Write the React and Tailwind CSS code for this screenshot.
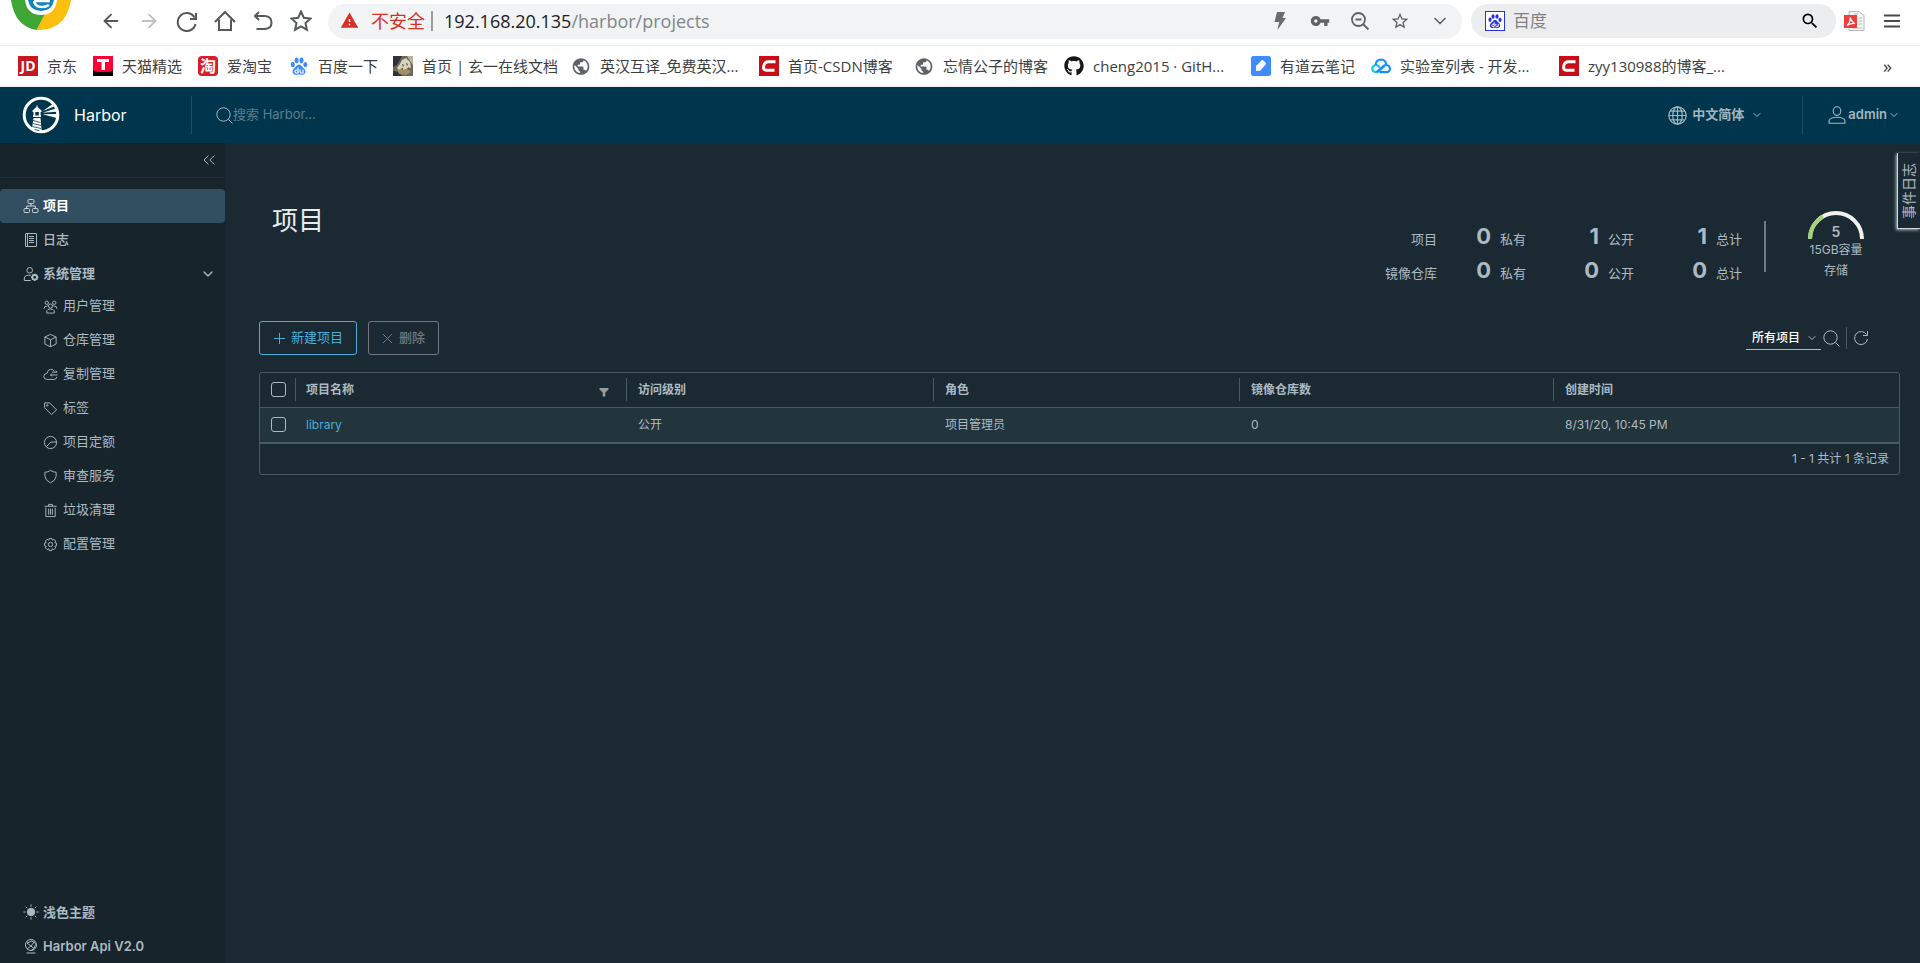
import { useState } from 'react';
import { LuArrowLeft, LuArrowRight, LuChevronDown, LuChevronsLeft, LuMenu } from 'react-icons/lu';
import { MdPublic, MdSearch, MdStarBorder, MdVpnKey, MdWarning } from 'react-icons/md';
import { FaGithub } from 'react-icons/fa';

const bookmarks = [
  { label: '京东', icon: 'jd', width: 'w-[30px]' },
  { label: '天猫精选', icon: 'tmall', width: 'w-[60px]' },
  { label: '爱淘宝', icon: 'taobao', width: 'w-[46px]' },
  { label: '百度一下', icon: 'baidu', width: 'w-[59px]' },
  { label: '首页 | 玄一在线文档', icon: 'avatar', width: 'w-[133px]' },
  { label: '英汉互译_免费英汉...', icon: 'globe', width: 'w-[143px]' },
  { label: '首页-CSDN博客', icon: 'csdn', width: 'w-[110px]' },
  { label: '忘情公子的博客', icon: 'globe', width: 'w-[105px]' },
  { label: 'cheng2015 · GitH...', icon: 'github', width: 'w-[142px]' },
  { label: '有道云笔记', icon: 'note', width: 'w-[75px]' },
  { label: '实验室列表 - 开发...', icon: 'cloud', width: 'w-[143px]' },
  { label: 'zyy130988的博客_...', icon: 'csdn', width: 'w-[143px]' },
];

const adminItems = [
  { label: '用户管理', icon: 'users' },
  { label: '仓库管理', icon: 'cube' },
  { label: '复制管理', icon: 'cloud' },
  { label: '标签', icon: 'tag' },
  { label: '项目定额', icon: 'quota' },
  { label: '审查服务', icon: 'shield' },
  { label: '垃圾清理', icon: 'trash' },
  { label: '配置管理', icon: 'cog' },
];

const stats = [
  { label: '项目', values: [[0, '私有'], [1, '公开'], [1, '总计']] },
  { label: '镜像仓库', values: [[0, '私有'], [0, '公开'], [0, '总计']] },
];

const columns = [
  { label: '访问级别', width: 'w-[307px]' },
  { label: '角色', width: 'w-[306px]' },
  { label: '镜像仓库数', width: 'w-[314px]' },
  { label: '创建时间', width: '' },
];

const projects = [
  { name: 'library', cells: ['公开', '项目管理员', '0', '8/31/20, 10:45 PM'] },
];

function BookmarkIcon({ name }) {
  switch (name) {
    case 'jd':
      return <span className="flex h-5 w-5 items-center justify-center bg-[#c81623] text-sm font-bold text-white">JD</span>;
    case 'tmall':
      return (
        <svg viewBox="0 0 20 20" className="h-5 w-5">
          <path fill="#ff0036" d="M0 0h20v16H0z" />
          <path fill="#000" d="M0 14q2 2 5 2h10q3 0 5-2v6H0z" />
          <path fill="#fff" d="M4 3h12v3h-4v8H8.500V6H4z" />
        </svg>
      );
    case 'taobao':
      return <span className="flex h-5 w-5 items-center justify-center rounded-sm bg-[#dc1c28] text-base font-bold text-white">淘</span>;
    case 'baidu':
      return <BaiduPaw className="h-5 w-5 text-[#3b8bff]" />;
    case 'avatar':
      return (
        <svg viewBox="0 0 20 20" className="h-5 w-5">
          <path fill="#6d675a" d="M0 0h20v20H0z" />
          <path fill="#2f3238" d="M0 0h9L4 9 0 11zM0 15l6 1 3 4H0z" />
          <path fill="#b9b3a2" d="M14 0h6v9l-3-4z" />
          <path fill="#d9d2bf" d="M9 4l4-2 4 4 1 5-3 4-7 1-4-4 3-4z" />
          <path fill="#a58f62" d="M4 13l6 1 5-2 3 4-5 3-7-1z" />
          <path fill="#4d4638" d="M9 8l2 1-1 2zM13 7l2 1-1 2zM7 13l3-1v2zM14 13l2-2 1 3z" />
        </svg>
      );
    case 'globe':
      return <MdPublic className="h-[21px] w-5 text-[#5f6368]" />;
    case 'csdn':
      return (
        <svg viewBox="0 0 20 20" className="h-5 w-5">
          <path fill="#ca0c16" d="M0 0h20v20H0z" />
          <path fill="none" stroke="#fff" strokeWidth="3" d="M16.500 5.700H9.500Q5.500 5.700 4.700 10T7.500 14.300h8" />
        </svg>
      );
    case 'github':
      return <FaGithub className="h-5 w-5 text-[#191717]" />;
    case 'note':
      return (
        <svg viewBox="0 0 20 20" className="h-5 w-5">
          <rect width="20" height="20" rx="2.500" fill="#3f8cff" />
          <path fill="#fff" d="M5 15V10l6-6q2 0 4 4l-5.500 6.500z" />
        </svg>
      );
    default:
      return (
        <svg viewBox="0 0 20 20" className="h-5 w-5" fill="none" strokeWidth="2.200">
          <path stroke="#16c8e8" d="M9 12Q7 8.500 4.500 9.200 1 10 1.300 13T5 16.200q2 0 4-2l4.500-4" />
          <path stroke="#1e8cff" d="M4.500 9Q5 3.700 10 3.500q4.500 0 5.500 5.200M8.500 16.200H15q4-.4 3.900-3.700T15 9q-1.800 0-3.500 2L5.500 16.200" />
        </svg>
      );
  }
}

function BaiduPaw({ className }) {
  return (
    <svg viewBox="0 0 20 20" className={className} fill="currentColor">
      <ellipse cx="3.800" cy="8.400" rx="2" ry="2.700" />
      <ellipse cx="7.600" cy="4.400" rx="2" ry="2.800" />
      <ellipse cx="12.500" cy="4.400" rx="2" ry="2.800" />
      <ellipse cx="16.300" cy="8.600" rx="2" ry="2.600" />
      <path d="M10 8.600c2.400 0 3.100 2.500 5 4s2.300 6-1.500 6.200c-1.500 0-2-.3-3.500-.3s-2 .3-3.500.3C2.700 18.600 3.100 14.100 5 12.600s2.600-4 5-4z" />
      <path fill="none" stroke="#fff" strokeWidth="1.200" d="M9 11.500V17H7.300q-1.300-.1-1.300-1.500t1.300-1.500H9M11 13.500V16q.2 1 1.200 1H14v-3.500" />
    </svg>
  );
}

function ClarityIcon({ name, className = 'h-4 w-4' }) {
  const shapes = {
    projects: (
      <>
        <rect x="5" y="1.500" width="6" height="4" rx="1.200" />
        <rect x="1" y="10.500" width="5.500" height="4" rx="1" />
        <rect x="9.500" y="10.500" width="5.500" height="4" rx="1" />
        <path d="M8 5.500V8M3.700 10.500V8h8.600v2.500" />
      </>
    ),
    logs: (
      <>
        <rect x="2.500" y="1.500" width="11" height="13" rx=".5" />
        <path d="M6 4.500h5M6 6.500h5M6 8.500h5M6 10.500h5M4.500 1.500v13" />
      </>
    ),
    admin: (
      <>
        <circle cx="6.700" cy="4.300" r="2.800" />
        <path d="M8 9.300Q2 8.500 1.300 12v2.500h6.500" />
        <circle cx="11.700" cy="11.300" r="2.300" strokeWidth="1.800" />
        <path strokeWidth="1.500" d="M11.700 7.700v1.300M11.700 13.600v1.300M8 11.300h1.300M14 11.300h1.500M9.200 8.800l.9.900M14.200 8.800l-.9.900M9.200 13.800l.9-.9M14.200 13.800l-.9-.9" />
      </>
    ),
    users: (
      <>
        <circle cx="8" cy="7.500" r="2.200" />
        <path d="M4 15v-2.500q.7-1.800 4-1.800t4 1.800V15zM1 10.500q0-3.300 4-3.200M15 10.500q0-3.300-4-3.200" />
        <circle cx="4" cy="4" r="1.800" />
        <circle cx="12" cy="4" r="1.800" />
      </>
    ),
    cube: <path d="M8 1.500l6 2.700v7.600L8 14.700l-6-2.900V4.200zM2 4.200l6 3 6-3M8 7.200v7.500" />,
    cloud: (
      <path d="M12.500 4.800Q11 2.200 8 2.500 4.700 3 4.500 6.500 1 7 .8 10q0 3 3.200 3.200h8q2.500-.2 2.800-2.700M15 5.500H9.500M15.500 8.500H8M13.700 4l1.500 1.500M9.500 7L8 8.500 9.500 10" />
    ),
    tag: (
      <>
        <path d="M1.700 2v5.200l7.300 7.300 5.500-5L7.200 2z" />
        <circle cx="4.500" cy="4.700" r=".8" />
      </>
    ),
    quota: (
      <>
        <circle cx="8" cy="8" r="6.500" />
        <path d="M3.500 12.500L8.500 7.500h6" />
      </>
    ),
    shield: <path d="M8 1.500q2.500 1.800 6 2v4.300q-.5 4.500-6 7-5.500-2.500-6-7V3.500q3.500-.2 6-2z" />,
    trash: <path d="M1.500 3.500h13M6 3.500v-2h4v2M3 5v9.500h10V5M6 6v6.500M8 6v6.500M10 6v6.500" />,
    cog: (
      <>
        <circle cx="8" cy="8" r="2.300" />
        <path d="M6.700 1.500h2.600l.5 1.900 1.800-1 1.900 1.900-1 1.800 2 .5v2.700l-2 .5 1 1.800-1.900 1.900-1.800-1-.5 2H6.700l-.5-2-1.800 1-1.900-1.900 1-1.800-2-.5V6.600l2-.5-1-1.800 1.900-1.900 1.800 1z" />
      </>
    ),
    sun: (
      <>
        <circle cx="8" cy="8" r="3.700" fill="currentColor" />
        <path d="M8 .5v2.200M8 13.300v2.200M.5 8h2.200M13.300 8h2.200M2.700 2.700l1.500 1.500M11.800 11.800l1.500 1.500M2.700 13.300l1.500-1.500M11.800 4.200l1.500-1.500" />
      </>
    ),
    api: (
      <>
        <circle cx="8" cy="7" r="5.500" />
        <path d="M3.500 15h9M4 5l7 5.500M11.500 3.500L8 8l-4 3M4 5l5-2 3.500 2.500M8 12.500l3-2 1.500-4" />
      </>
    ),
    user: (
      <>
        <ellipse cx="8" cy="4.500" rx="3.400" ry="3.800" />
        <path d="M1 15.300v-2.500Q2 10 8 10t7 2.800v2.500z" />
      </>
    ),
    world: (
      <>
        <circle cx="8" cy="8" r="7.300" />
        <path d="M8 .7v14.600M.7 8h14.600M2 4.300h12M2 11.700h12" />
        <ellipse cx="8" cy="8" rx="4" ry="7.300" />
      </>
    ),
  };
  return (
    <svg viewBox="0 0 16 16" className={`shrink-0 ${className}`} fill="none" stroke="currentColor" strokeWidth="1">
      {shapes[name]}
    </svg>
  );
}

function HarborLogo() {
  return (
    <svg viewBox="0 0 38 38" className="h-[38px] w-[38px]">
      <circle cx="19" cy="19" r="16.800" fill="none" stroke="#fff" strokeWidth="3" />
      <path fill="#fff" d="M10.500 14.500L14.500 11v-1.500h1V11l4 3.500v1.500h-9zM11.500 16h1.800v4h-1.800zM16.800 16h1.800v4h-1.800zM11 19.500h8V21h-8z" />
      <path fill="#fff" d="M11.500 22h7l1.200 13.500q-5.500.5-9.700-3z" />
      <path stroke="#00364d" strokeWidth=".8" d="M11 24.500l7.500 2M11 27.500l8 2M10.500 30.500l8.500 2M12.500 33.500l5 1.200" />
      <path fill="#fff" d="M20.500 15.200L31 7.800l1.600 2.400zM20.500 16.700l13.200-4.200.8 3.200zM20.500 18.200l14.500-.2-.3 4z" />
    </svg>
  );
}

function ToolIcon({ d, className = 'h-[22px] w-[22px]' }) {
  return (
    <svg viewBox="0 0 22 22" className={className} fill="none" stroke="currentColor" strokeWidth="2">
      <path d={d} />
    </svg>
  );
}

function BrowserBar() {
  return (
    <div className="flex h-[45px] items-start bg-white pt-1">
      <svg viewBox="0 0 60 30" className="-mt-1 ml-[11px] h-[30px] w-[60px] shrink-0">
        <path fill="#3fa535" d="M0 0h42L26 30Q4 27 0 0z" />
        <path fill="#fdbf0f" d="M60 0H41L25.500 30Q55 31 60 0z" />
        <path fill="#fff" d="M14 0h32q-2 15-16 15T14 0z" />
        <path fill="#1183bd" d="M17 0h26q-2 11-13 11T17 0z" />
        <path fill="none" stroke="#fff" strokeWidth="2.500" d="M23 1h16M23 1q1 6 8 6 4 0 7-2" />
      </svg>
      <nav className="ml-[29px] flex h-[34px] items-center gap-4 text-[#55585b]">
        <button aria-label="后退"><LuArrowLeft className="h-[22px] w-[22px]" /></button>
        <button aria-label="前进" className="text-[#bfc1c3]"><LuArrowRight className="h-[22px] w-[22px]" /></button>
        <button aria-label="刷新"><ToolIcon d="M18.500 7.500A9 9 0 1 0 19.500 14M20 3v6h-6" /></button>
        <button aria-label="主页"><ToolIcon d="M1 12L11 2l10 10M5 9.500V20h12V9.500" /></button>
        <button aria-label="撤销"><ToolIcon d="M7 2L3 6l4 4M3 6h10q6.500.500 6.500 6.500T13 19H4.500" /></button>
        <button aria-label="收藏">
          <ToolIcon d="M11 1.500l2.800 6.200 6.700.8-5 4.500 1.400 6.700-5.900-3.400-5.900 3.400 1.400-6.700-5-4.500 6.700-.8z" />
        </button>
      </nav>
      <div className="ml-4 flex h-[35px] flex-1 items-center rounded-full bg-[#f1f3f4] px-3 pb-[2px] text-[#5f6368]">
        <MdWarning className="h-[19px] w-[19px] text-[#d93025]" />
        <span className="ml-3 text-lg leading-6 text-[#d93025]">不安全</span>
        <span className="ml-[6px] h-5 w-[2px] bg-[#9a9da0]" />
        <div className="ml-[11px] flex-1 text-lg leading-6 text-[#202124]">
          192.168.20.135<span className="text-[#80868b]">/harbor/projects</span>
        </div>
        <div className="flex items-center gap-5">
          <svg viewBox="0 0 20 20" className="h-5 w-5" fill="#6b6b6b">
            <path d="M7 1h8l-2.500 6H16L7.500 19l1.700-8H4.500z" />
          </svg>
          <MdVpnKey className="h-5 w-5" />
          <svg viewBox="0 0 20 20" className="h-5 w-5" fill="none" stroke="currentColor" strokeWidth="1.800">
            <circle cx="8.500" cy="8.500" r="6.500" />
            <path d="M13 13l5.500 5.500M5.500 8.500h6" />
          </svg>
          <MdStarBorder className="h-5 w-5" />
          <LuChevronDown className="h-5 w-5" />
        </div>
      </div>
      <div className="ml-[9px] flex h-[34px] w-[365px] items-center rounded-full bg-[#ecedef] pl-[14px] pr-4">
        <span className="flex h-5 w-5 items-center justify-center border border-[#2932e1] bg-white">
          <BaiduPaw className="h-4 w-4 text-[#2932e1]" />
        </span>
        <input
          aria-label="搜索"
          placeholder="百度"
          className="ml-2 min-w-0 flex-1 bg-transparent text-[17px] leading-6 outline-none placeholder:text-[#808285]"
        />
        <MdSearch className="h-5 w-5 text-black" />
      </div>
      <svg viewBox="0 0 22 22" className="ml-2 mt-[6px] h-[22px] w-[22px] shrink-0">
        <path fill="#f5f5f5" stroke="#b8b8b8" d="M5 1.500h10l5 4v15H5z" />
        <path stroke="#b8b8b8" d="M10 4h4M15 8h3M15 11h3M15 14h3M8 18h10" />
        <path fill="#ec3e3e" d="M0 5h13v13H0z" />
        <path fill="none" stroke="#fff" strokeWidth="1.200" d="M6 7.500q2 5 5 6-4-.5-8 2 4-4 3-8z" />
      </svg>
      <button aria-label="菜单" className="ml-[15px] mr-[17px] mt-[6px] text-[#4a4a4a]">
        <LuMenu className="h-[22px] w-[22px]" />
      </button>
    </div>
  );
}

function BookmarkBar() {
  return (
    <div className="flex h-[42px] items-center border-y border-[#ededf0] bg-white pl-[18px] pr-7 text-[15px] leading-5 text-[#3c4043]">
      {bookmarks.map((b) => (
        <a key={b.label} href="#" className="mr-4 flex shrink-0 items-center gap-[9px]">
          <BookmarkIcon name={b.icon} />
          <span className={`whitespace-nowrap ${b.width}`}>{b.label}</span>
        </a>
      ))}
      <button aria-label="更多书签" className="ml-auto text-lg leading-5">»</button>
    </div>
  );
}

function Header() {
  return (
    <header className="flex h-14 items-center bg-[#00364d] text-[13px] text-[#a3b6bf]">
      <a href="#" className="flex w-[191px] items-center gap-[14px] pl-[22px] text-base text-white">
        <HarborLogo />
        Harbor
      </a>
      <div className="flex h-[38px] flex-1 items-center border-l border-[#1f4f63] pl-6">
        <Magnifier className="h-[17px] w-[17px]" />
        <input
          aria-label="搜索 Harbor"
          placeholder="搜索 Harbor..."
          className="w-64 bg-transparent outline-none placeholder:text-[#5b7f8e]"
        />
      </div>
      <button className="mr-[39px] flex items-center font-semibold">
        <ClarityIcon name="world" className="mr-[5px] h-[19px] w-[19px]" />
        中文简体
        <LuChevronDown className="ml-[7px] h-3 w-3" />
      </button>
      <button className="flex h-[38px] items-center border-l border-[#1f4f63] pl-[25px] pr-5 font-semibold">
        <ClarityIcon name="user" className="mr-[2px] h-[18px] w-[18px]" />
        admin
        <LuChevronDown className="ml-px h-3 w-3" />
      </button>
    </header>
  );
}

function Magnifier({ className }) {
  return (
    <svg viewBox="0 0 17 17" className={`shrink-0 ${className}`} fill="none" stroke="currentColor">
      <circle cx="7.500" cy="7.500" r="6.700" />
      <path d="M12.300 12.300l4.200 4.200" />
    </svg>
  );
}

function Sidebar() {
  return (
    <aside className="flex w-[225px] shrink-0 flex-col bg-[#17242b] text-[13px] leading-5 text-[#acbac3]">
      <div className="flex h-[35px] items-center justify-end border-b border-[#212f37] pr-[6px]">
        <button aria-label="折叠"><LuChevronsLeft className="h-5 w-5" strokeWidth={1.200} /></button>
      </div>
      <nav className="mt-[11px] flex flex-col">
        <a href="#" className="flex h-[34px] items-center gap-1 rounded-[4px] bg-[#324f62] pl-[23px] font-bold text-white">
          <ClarityIcon name="projects" className="h-4 w-4 text-[#c8d3d9]" />
          <span className="pb-[2px]">项目</span>
        </a>
        <a href="#" className="flex h-[34px] items-center gap-1 pl-[23px] font-medium">
          <ClarityIcon name="logs" />
          <span className="pb-[2px]">日志</span>
        </a>
        <button className="flex h-[34px] items-center gap-1 pl-[23px] pr-[9px] font-bold">
          <ClarityIcon name="admin" />
          <span className="pb-[2px]">系统管理</span>
          <LuChevronDown className="ml-auto h-4 w-4" />
        </button>
        <ul className="-mt-[2px]">
          {adminItems.map((item) => (
            <li key={item.label}>
              <a href="#" className="flex h-[34px] items-center gap-[5px] pl-[43px]">
                <ClarityIcon name={item.icon} className="h-[15px] w-[15px]" />
                <span className="pb-[2px]">{item.label}</span>
              </a>
            </li>
          ))}
        </ul>
      </nav>
      <div className="mt-auto font-semibold">
        <button className="flex h-[34px] items-center gap-1 pl-[23px]">
          <ClarityIcon name="sun" />
          浅色主题
        </button>
        <a href="#" className="flex h-[34px] items-center gap-1 pl-[23px]">
          <ClarityIcon name="api" />
          Harbor Api V2.0
        </a>
      </div>
    </aside>
  );
}

function Statistics() {
  return (
    <div className="flex items-start text-[13px]">
      <div className="mt-[15px]">
        {stats.map((row) => (
          <div key={row.label} className="flex h-[34px] items-baseline">
            <span className="w-20 text-right">{row.label}</span>
            {row.values.map(([count, label], i) => (
              <span key={label} className={`flex items-baseline justify-end gap-[9px] ${i === 0 ? 'w-[89px]' : 'w-[108px]'}`}>
                <span className="text-[22px] font-bold leading-[34px]">{count}</span>
                {label}
              </span>
            ))}
          </div>
        ))}
      </div>
      <div className="ml-[22px] mt-[17px] h-[51px] w-[2px] bg-[#6f7b82]" />
      <div className="ml-[40px] mt-[7px] flex w-[60px] flex-col items-center text-xs">
        <svg viewBox="0 0 56 28" className="h-7 w-14">
          <path fill="none" stroke="#f1f1f1" strokeWidth="4" d="M2 28a26 26 0 0 1 52 0" />
          <path fill="none" stroke="#a5d27c" strokeWidth="4" d="M2 28A26 26 0 0 1 15 5.500" />
          <text x="28" y="26" textAnchor="middle" fontSize="14" fontWeight="600" fill="#acbac3">5</text>
        </svg>
        <span className="mt-[2px] whitespace-nowrap leading-[18px]">15GB容量</span>
        <span className="mt-[3px] leading-[18px]">存储</span>
      </div>
    </div>
  );
}

function ProjectTable() {
  const [selected, setSelected] = useState([]);
  const box = 'block h-[15px] w-[15px] appearance-none rounded-[3px] border border-[#acbac3] checked:bg-[#4aaed9]';
  const toggle = (name) =>
    setSelected(selected.includes(name) ? selected.filter((n) => n !== name) : [...selected, name]);

  return (
    <div className="mt-[17px] rounded-[3px] border border-[#495a67] text-xs">
      <table className="w-full table-fixed text-left">
        <thead>
          <tr className="h-[34px]">
            <th className="w-[35px] pl-[11px]">
              <input
                type="checkbox"
                aria-label="全选"
                className={box}
                checked={selected.length === projects.length}
                onChange={(e) => setSelected(e.target.checked ? projects.map((p) => p.name) : [])}
              />
            </th>
            <th className="w-[331px]">
              <div className="flex h-[23px] items-center justify-between border-l border-[#495a67] pl-[10px] pr-[17px]">
                项目名称
                <button aria-label="筛选">
                  <svg viewBox="0 0 10 10" className="mt-1 h-[10px] w-[10px]" fill="#9a9a9a">
                    <path d="M.5 1h9v1.500L6.300 5.500V9.500H3.700v-4L.5 2.500z" />
                  </svg>
                </button>
              </div>
            </th>
            {columns.map((c) => (
              <th key={c.label} className={c.width}>
                <div className="flex h-[23px] items-center border-l border-[#495a67] pl-[11px]">{c.label}</div>
              </th>
            ))}
          </tr>
        </thead>
        <tbody>
          {projects.map((p) => (
            <tr key={p.name} className="h-[35px] border-t border-[#495a67] bg-[#22343c]">
              <td className="pl-[11px]">
                <input
                  type="checkbox"
                  aria-label={p.name}
                  className={box}
                  checked={selected.includes(p.name)}
                  onChange={() => toggle(p.name)}
                />
              </td>
              <td className="pl-[11px]"><a href="#" className="text-[#4aaed9]">{p.name}</a></td>
              {p.cells.map((cell) => (
                <td key={cell} className="pl-[12px]">{cell}</td>
              ))}
            </tr>
          ))}
        </tbody>
      </table>
      <div className="flex h-8 items-center justify-end border-t-2 border-[#495a67] pr-[10px]">
        1 - 1 共计 1 条记录
      </div>
    </div>
  );
}

export default function App() {
  return (
    <div className="flex min-h-screen flex-col bg-[#1b2a32] font-[Inter,'Noto_Sans_CJK_SC',sans-serif]">
      <div className="font-['Open_Sans','Noto_Sans_CJK_SC',sans-serif]">
        <BrowserBar />
        <BookmarkBar />
      </div>
      <Header />
      <div className="relative flex flex-1">
        <Sidebar />
        <main className="min-w-0 flex-1 pl-[34px] pr-5 pt-[61px] text-[#acbac3]">
          <div className="flex h-[117px] items-start justify-between pl-[13px] pr-[34px]">
            <h1 className="text-[26px] leading-[34px] text-[#e9ecef]">项目</h1>
            <Statistics />
          </div>
          <div className="flex items-center justify-between">
            <div className="flex gap-[11px] text-[13px]">
              <button className="flex h-[34px] w-[98px] items-center justify-center gap-[5px] rounded-[3px] border border-[#4aaed9] text-[#4aaed9]">
                <svg viewBox="0 0 13 13" className="h-[13px] w-[13px]" stroke="currentColor">
                  <path d="M6.500 1v11M1 6.500h11" />
                </svg>
                新建项目
              </button>
              <button className="flex h-[34px] w-[71px] items-center justify-center gap-[6px] rounded-[3px] border border-[#72797e] font-medium text-[#72797e]" disabled>
                <svg viewBox="0 0 11 11" className="h-[11px] w-[11px]" stroke="currentColor">
                  <path d="M1 1l9 9M10 1l-9 9" />
                </svg>
                删除
              </button>
            </div>
            <div className="flex items-center pr-[31px]">
              <div className="flex items-center border-b border-[#acbac3] pl-[6px] pr-[3px]">
                <select aria-label="项目类型" className="h-[22px] w-[54px] appearance-none bg-transparent text-xs font-medium text-white outline-none">
                  <option>所有项目</option>
                </select>
                <LuChevronDown className="h-3 w-3" />
              </div>
              <button aria-label="搜索" className="ml-[2px]"><Magnifier className="h-[17px] w-[17px]" /></button>
              <span className="ml-[6px] h-[22px] w-px bg-[#495a67]" />
              <button aria-label="刷新" className="ml-[6px]">
                <svg viewBox="0 0 16 16" className="h-4 w-4" fill="none" stroke="currentColor">
                  <path d="M13.500 4.500A6.500 6.500 0 1 0 14.500 9M14.500 1v4.500H10" />
                </svg>
              </button>
            </div>
          </div>
          <ProjectTable />
        </main>
        <button className="absolute right-0 top-[10px] flex h-[76px] w-[23px] items-center justify-center border-b border-l border-[#d5d9db] text-sm text-[#acbac3] shadow-[-1px_1px_3px_#acbac3]">
          <span className="rotate-180 leading-5 [text-orientation:sideways] [writing-mode:vertical-rl]">事件日志</span>
        </button>
      </div>
    </div>
  );
}
